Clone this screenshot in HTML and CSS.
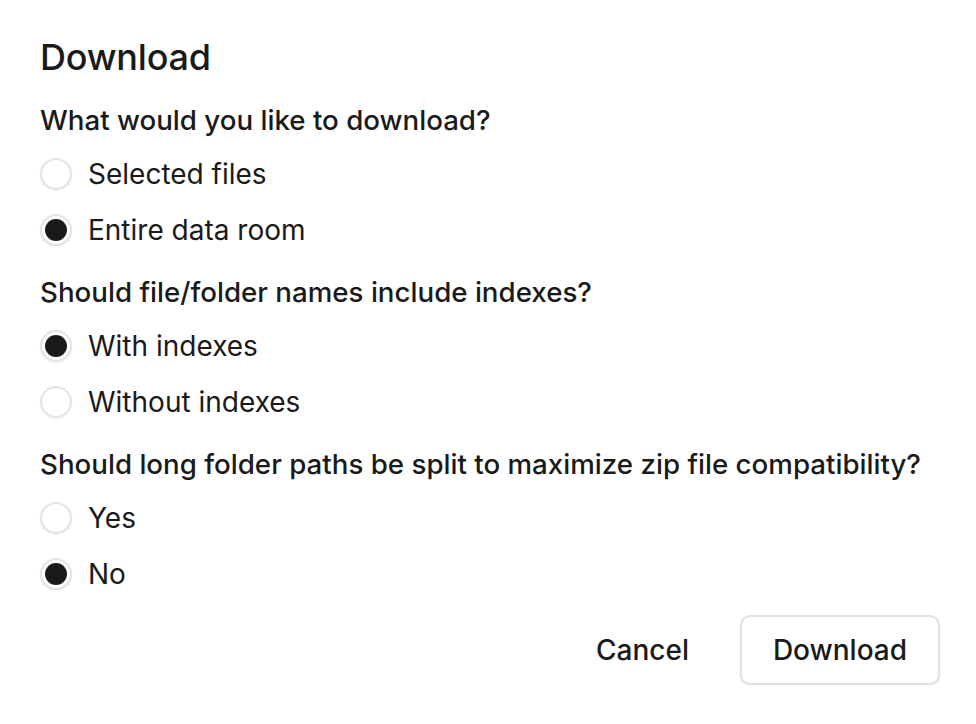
FILE: index.html
```html
<!DOCTYPE html>
<html>
<head>
<meta charset="utf-8">
<link rel="stylesheet" href="styles.css">
</head>
<body>
<div class="dialog">
  <h1 class="title">Download</h1>
  <div class="section">
    <div class="question">What would you like to download?</div>
    <div class="options">
      <label class="option"><span class="radio"></span><span class="label">Selected files</span></label>
      <label class="option"><span class="radio checked"></span><span class="label">Entire data room</span></label>
    </div>
  </div>
  <div class="section">
    <div class="question">Should file/folder names include indexes?</div>
    <div class="options">
      <label class="option"><span class="radio checked"></span><span class="label">With indexes</span></label>
      <label class="option"><span class="radio"></span><span class="label">Without indexes</span></label>
    </div>
  </div>
  <div class="section">
    <div class="question">Should long folder paths be split to maximize zip file compatibility?</div>
    <div class="options">
      <label class="option"><span class="radio"></span><span class="label">Yes</span></label>
      <label class="option"><span class="radio checked"></span><span class="label">No</span></label>
    </div>
  </div>
  <div class="actions">
    <button class="btn btn-ghost">Cancel</button>
    <button class="btn btn-outline">Download</button>
  </div>
</div>
</body>
</html>
```
FILE: styles.css
```css
* { box-sizing: border-box; }
html, body { margin: 0; padding: 0; background: #ffffff; }
body {
  font-family: Inter, "Noto Sans", sans-serif;
  color: #1a1a1a;
}
.dialog {
  width: 976px;
  padding: 35px 36px 0 40px;
  display: flex;
  flex-direction: column;
}
.title {
  margin: 0;
  font-size: 36px;
  line-height: 44px;
  font-weight: 500;
  letter-spacing: -0.2px;
}
.section {
  display: flex;
  flex-direction: column;
  gap: 8px;
  margin-top: 16px;
}
.title + .section { margin-top: 23px; }
.question {
  font-size: 27.7px;
  line-height: 36px;
  font-weight: 500;
}
.options { display: flex; flex-direction: column; }
.option {
  display: flex;
  align-items: center;
  height: 56px;
  gap: 16px;
}
.radio {
  width: 32px;
  height: 32px;
  border-radius: 50%;
  border: 2px solid #e3e3e3;
  background: #fff;
  box-shadow: 0 1px 2px rgba(0,0,0,0.06);
  display: flex;
  align-items: center;
  justify-content: center;
  flex: none;
}
.radio.checked::after {
  content: "";
  width: 22px;
  height: 22px;
  border-radius: 50%;
  background: #1a1a1a;
}
.label {
  font-size: 28px;
  line-height: 36px;
  font-weight: 400;
}
.actions {
  display: flex;
  justify-content: flex-end;
  gap: 16px;
  margin-top: 13px;
}
.btn {
  font-family: inherit;
  font-size: 28px;
  font-weight: 500;
  color: #1a1a1a;
  height: 70px;
  padding: 0 33px;
  border-radius: 10px;
  background: #fff;
  cursor: pointer;
}
.btn-ghost { border: 2px solid transparent; }
.btn-outline {
  border: 2px solid #e0e0e0;
  box-shadow: 0 1px 2px rgba(0,0,0,0.05);
  width: 200px;
  padding: 0;
}
```
